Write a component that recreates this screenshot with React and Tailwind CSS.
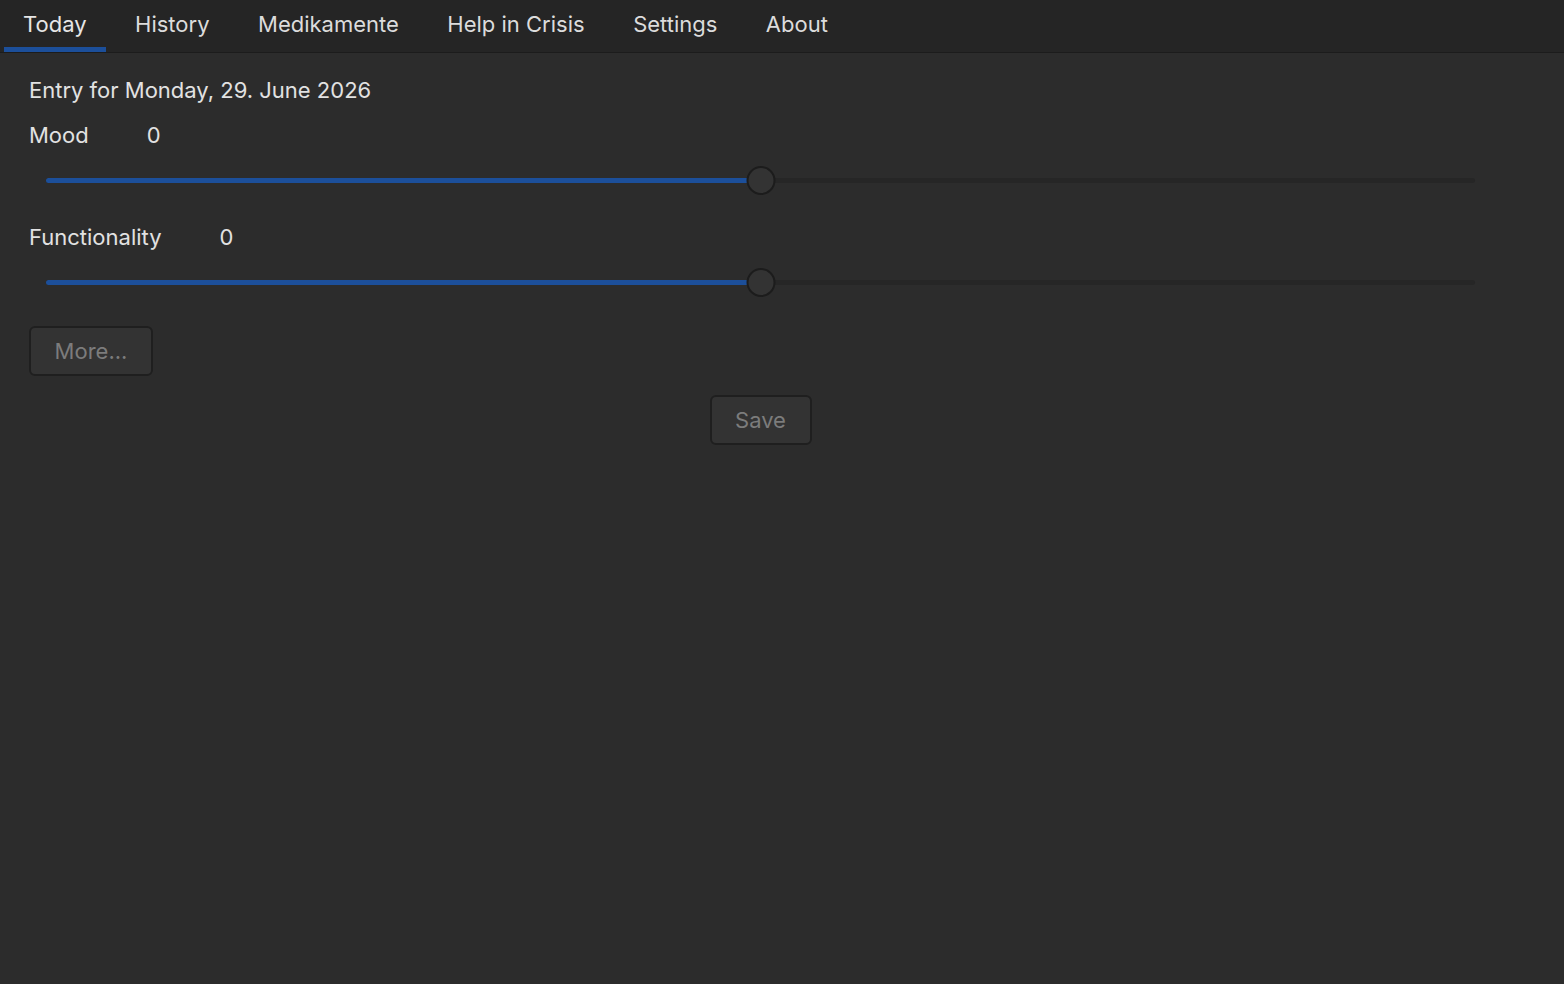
import React, { useState } from 'react';

const tabs = ['Today', 'History', 'Medikamente', 'Help in Crisis', 'Settings', 'About'];

function Slider({ value, onChange }) {
  // value range -10..10, shown as percent of track
  const pct = ((value + 10) / 20) * 100;
  return (
    <div className="relative h-[30px] ml-[17px] mr-[60px] flex items-center">
      <div className="w-full h-[5px] rounded-full bg-[#262626]">
        <div className="h-full rounded-full bg-[#1c4f9a]" style={{ width: `${pct}%` }} />
      </div>
      <div
        className="absolute w-[29px] h-[29px] rounded-full bg-[#333333] border-2 border-[#1c1c1c] -translate-x-1/2"
        style={{ left: `${pct}%` }}
      />
      <input
        type="range"
        min="-10"
        max="10"
        value={value}
        onChange={(e) => onChange(Number(e.target.value))}
        className="absolute inset-0 w-full opacity-0 cursor-pointer"
      />
    </div>
  );
}

function App() {
  const [active, setActive] = useState('Today');
  const [mood, setMood] = useState(0);
  const [func, setFunc] = useState(0);

  return (
    <div
      className="min-h-screen bg-[#2c2c2c] text-[#e2e2e2] text-[22px]"
      style={{ fontFamily: 'Inter, "Noto Sans", sans-serif' }}
    >
      <div className="h-[53px] bg-[#252525] border-b border-[#1c1c1c] flex pl-[4px] gap-[10.5px]">
        {tabs.map((t) => (
          <button
            key={t}
            onClick={() => setActive(t)}
            className={
              'relative px-[19px] h-full flex items-center pb-[3px] ' +
              (active === t ? 'text-[#e6e6e6]' : 'text-[#dcdcdc]')
            }
          >
            {t}
            {active === t && (
              <span className="absolute left-0 right-0 bottom-0 h-[5px] bg-[#1c4f9a]" />
            )}
          </button>
        ))}
      </div>

      <div className="px-[29px] pt-[23px]">
        <div className="leading-[28px]">Entry for Monday, 29. June 2026</div>

        <div className="mt-[17px] flex gap-[58px] leading-[28px]">
          <span>Mood</span>
          <span>{mood}</span>
        </div>
        <div className="mt-[16px]">
          <Slider value={mood} onChange={setMood} />
        </div>

        <div className="mt-[28px] flex gap-[58px] leading-[28px]">
          <span>Functionality</span>
          <span>{func}</span>
        </div>
        <div className="mt-[16px]">
          <Slider value={func} onChange={setFunc} />
        </div>

        <button className="mt-[29px] w-[124px] h-[50px] rounded-[6px] bg-[#333333] border-2 border-[#1f1f1f] text-[#7c7c7c]">
          More...
        </button>

        <div className="mt-[19px] flex justify-center pl-[17px] pr-[60px]">
          <button className="w-[102px] h-[50px] rounded-[6px] bg-[#333333] border-2 border-[#1f1f1f] text-[#7c7c7c]">
            Save
          </button>
        </div>
      </div>
    </div>
  );
}

export default App;
